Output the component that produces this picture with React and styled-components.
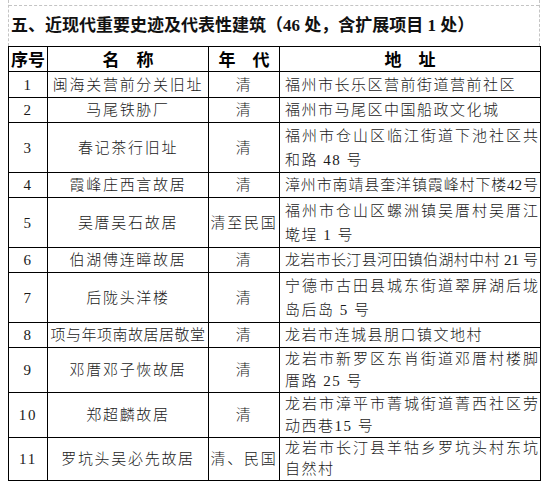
import React from "react";
import styled, { createGlobalStyle } from "styled-components";

const GlobalStyle = createGlobalStyle`
  html, body {
    margin: 0;
    padding: 0;
    background: #ffffff;
  }
  body {
    font-family: "Liberation Serif", "Noto Sans CJK SC", serif;
    color: #1a1a1a;
  }
`;

const Page = styled.div`
  padding-left: 8px;
  width: 532px;
`;

const Frame = styled.div`
  padding-top: 5px;
  border-left: 1px dashed #c4c4c4;
  border-right: 1px dashed #c4c4c4;
`;

const Title = styled.h1`
  margin: 0;
  height: 40px;
  line-height: 40px;
  padding-left: 2px;
  border-top: 1px dashed #c4c4c4;
  font-family: "Liberation Serif", "Noto Sans CJK SC", serif;
  font-size: 17px;
  font-weight: 700;
  color: #111;
  white-space: nowrap;
`;

const Table = styled.table`
  width: 532px;
  border-collapse: collapse;
  table-layout: fixed;
`;

const HeadCell = styled.th`
  border: 1px solid #000;
  padding: 0;
  font-family: "Noto Sans CJK SC", sans-serif;
  font-size: 17px;
  font-weight: 700;
  color: #000;
  text-align: center;
  vertical-align: middle;
  white-space: pre;
  line-height: 20px;
`;

const Cell = styled.td`
  border: 1px solid #000;
  padding: 0 ${(p) => (p.$left ? "2px 0 5px" : "0")};
  font-size: 15px;
  font-weight: 300;
  text-align: ${(p) => (p.$left ? "left" : "center")};
  vertical-align: middle;
  letter-spacing: ${(p) => (p.$tight ? "0.5px" : "1.7px")};
  white-space: nowrap;
  line-height: ${(p) => p.$lh || 22}px;
`;

const Line = styled.span`
  display: block;
  text-align: ${(p) => (p.$full ? "justify" : "left")};
  text-align-last: ${(p) => (p.$full ? "justify" : "left")};
  letter-spacing: ${(p) => (p.$full ? "0" : "1.5px")};
  white-space: normal;
`;

const rows = [
  { no: "1", name: "闽海关营前分关旧址", era: "清", addr: ["福州市长乐区营前街道营前社区"], h: 26 },
  { no: "2", name: "马尾铁胁厂", era: "清", addr: ["福州市马尾区中国船政文化城"], h: 25 },
  { no: "3", name: "春记茶行旧址", era: "清", addr: ["福州市仓山区临江街道下池社区共", "和路 48 号"], h: 50, lh: 24 },
  { no: "4", name: "霞峰庄西言故居", era: "清", addr: ["漳州市南靖县奎洋镇霞峰村下楼42号"], h: 25, fullLast: true },
  { no: "5", name: "吴厝吴石故居", era: "清至民国", addr: ["福州市仓山区螺洲镇吴厝村吴厝江", "墘埕 1 号"], h: 50, lh: 24 },
  { no: "6", name: "伯湖傅连暲故居", era: "清", addr: ["龙岩市长汀县河田镇伯湖村中村 21 号"], h: 25, fullLast: true },
  { no: "7", name: "后陇头洋楼", era: "清", addr: ["宁德市古田县城东街道翠屏湖后垅", "岛后岛 5 号"], h: 50, lh: 24 },
  { no: "8", name: "项与年项南故居居敬堂", era: "清", addr: ["龙岩市连城县朋口镇文地村"], h: 25, tight: true },
  { no: "9", name: "邓厝邓子恢故居", era: "清", addr: ["龙岩市新罗区东肖街道邓厝村楼脚", "厝路 25 号"], h: 45 },
  { no: "10", name: "郑超麟故居", era: "清", addr: ["龙岩市漳平市菁城街道菁西社区劳", "动西巷15 号"], h: 44 },
  { no: "11", name: "罗坑头吴必先故居", era: "清、民国", addr: ["龙岩市长汀县羊牯乡罗坑头村东坑", "自然村"], h: 43, lh: 21 },
];

export default function App() {
  return (
    <Page>
      <GlobalStyle />
      <Frame>
        <Title>五、近现代重要史迹及代表性建筑（46 处，含扩展项目 1 处）</Title>
      </Frame>
      <Table>
        <colgroup>
          <col style={{ width: 39 }} />
          <col style={{ width: 161 }} />
          <col style={{ width: 71 }} />
          <col style={{ width: 261 }} />
        </colgroup>
        <thead>
          <tr style={{ height: 25 }}>
            <HeadCell>序号</HeadCell>
            <HeadCell>{"名　称"}</HeadCell>
            <HeadCell>{"年　代"}</HeadCell>
            <HeadCell>{"地　址"}</HeadCell>
          </tr>
        </thead>
        <tbody>
          {rows.map((row) => (
            <tr key={row.no} style={{ height: row.h }}>
              <Cell>{row.no}</Cell>
              <Cell $tight={row.tight}>{row.name}</Cell>
              <Cell>{row.era}</Cell>
              <Cell $left $lh={row.lh}>
                {row.addr.map((line, i) => (
                  <Line
                    key={i}
                    $full={i < row.addr.length - 1 || row.fullLast}
                  >
                    {line}
                  </Line>
                ))}
              </Cell>
            </tr>
          ))}
        </tbody>
      </Table>
    </Page>
  );
}
